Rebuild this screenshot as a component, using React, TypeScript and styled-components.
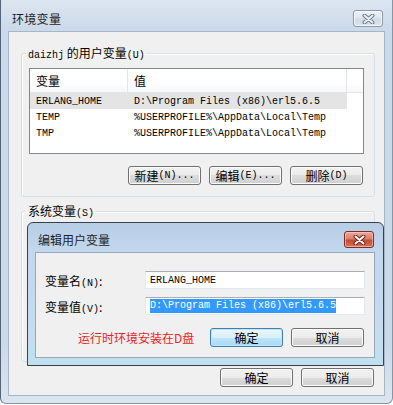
import styled, { createGlobalStyle } from "styled-components";

const GlobalStyle = createGlobalStyle`
  html, body {
    margin: 0;
    padding: 0;
    background: #ffffff;
  }
  body {
    font-family: "Noto Sans CJK SC", "Liberation Sans", sans-serif;
    font-size: 12px;
    color: #000;
  }
`;

const mono = `"Liberation Mono", "DejaVu Sans Mono", monospace`;

const Window = styled.div`
  position: relative;
  width: 393px;
  height: 404px;
  box-sizing: border-box;
  display: flex;
  flex-direction: column;
  background: linear-gradient(#dde6f0, #cbd9ea 30px, #ccd9e9 85%, #dbe5ef);
  border-left: 1px solid #56647a;
  border-right: 1px solid #8795a8;
  border-bottom: 1px solid #8795a8;
  border-radius: 0 0 6px 6px;
  overflow: hidden;
`;

const TitleBar = styled.div`
  flex: 0 0 31px;
  box-sizing: border-box;
  padding: 6px 9px 0 11px;
  display: flex;
  align-items: center;
  justify-content: space-between;
  color: #1e1e1e;
  letter-spacing: 0.3px;
`;

const CloseBox = styled.div<{ $danger?: boolean }>`
  width: 30px;
  height: 17px;
  box-sizing: border-box;
  border-radius: 3px;
  display: flex;
  align-items: center;
  justify-content: center;
  border: 1px solid ${(p) => (p.$danger ? "#7d2d22" : "#8b98a8")};
  background: ${(p) =>
    p.$danger
      ? "linear-gradient(#eaa99a, #d9806c 45%, #c24a33 55%, #d6735d)"
      : "linear-gradient(#eef2f6, #dfe6ee 45%, #d1dae5 55%, #dde4ec)"};
  box-shadow: inset 0 0 0 1px ${(p) => (p.$danger ? "rgba(255,210,200,0.6)" : "rgba(255,255,255,0.7)")};
`;

const Panel = styled.div`
  flex: 1 1 auto;
  min-height: 0;
  overflow: hidden;
  margin: 0 7px 7px 7px;
  box-sizing: border-box;
  background: #f0f0f0;
  border: 1px solid #a6b6c9;
  padding: 14px 9px 8px 12px;
  display: flex;
  flex-direction: column;
`;

const Group = styled.fieldset<{ $gap?: number }>`
  margin: ${(p) => p.$gap ?? 0}px 0 0 0;
  padding: 0 10px 11px 7px;
  border: 1px solid #d5dfe5;
  border-radius: 3px;
  box-shadow: inset 1px 1px 0 #ffffff;
  min-width: 0;
  flex-shrink: 0;
`;

const Legend = styled.legend`
  margin-left: -3px;
  padding: 0 2px;
  height: 14px;
  line-height: 14px;
  color: #000;
`;

const Key = styled.span`
  font-family: ${mono};
  font-size: 10px;
`;

const List = styled.div<{ $h: number }>`
  margin-top: 8px;
  height: ${(p) => p.$h}px;
  box-sizing: border-box;
  border: 1px solid #828790;
  background: #ffffff;
  overflow: hidden;
`;

const Header = styled.div`
  display: grid;
  grid-template-columns: 98px 219px 1fr;
  height: 23px;
  border-bottom: 1px solid #e5e5e5;
  background: linear-gradient(#ffffff, #ffffff 60%, #f6f7f9);
`;

const HeadCell = styled.div`
  display: flex;
  align-items: center;
  padding-left: 6px;
  border-right: 1px solid #e5e5e5;
  &:last-child {
    border-right: none;
  }
`;

const Row = styled.div<{ $selected?: boolean }>`
  display: grid;
  grid-template-columns: 98px 219px;
  height: 16px;
  align-items: center;
  font-family: ${mono};
  font-size: 10px;
  background: ${(p) => (p.$selected ? "#e4e4e4" : "transparent")};
  width: 317px;
`;

const Cell = styled.div`
  padding-left: 6px;
  white-space: nowrap;
`;

const ButtonRow = styled.div<{ $top: number }>`
  display: flex;
  justify-content: flex-end;
  gap: 8px;
  margin-top: ${(p) => p.$top}px;
  padding-right: 1px;
  flex-shrink: 0;
`;

const Button = styled.div<{ $focus?: boolean }>`
  width: 73px;
  height: 19px;
  box-sizing: border-box;
  border-radius: 3px;
  display: flex;
  align-items: center;
  justify-content: center;
  white-space: nowrap;
  line-height: 1;
  border: 1px solid ${(p) => (p.$focus ? "#3c7fb1" : "#707070")};
  background: ${(p) =>
    p.$focus
      ? "linear-gradient(#eaf6fd, #d9f0fc 50%, #bee6fd 50%, #a7d9f5)"
      : "linear-gradient(#f2f2f2, #ebebeb 50%, #dddddd 50%, #cfcfcf)"};
  box-shadow: inset 0 0 0 1px ${(p) => (p.$focus ? "#c4e5f6" : "#fcfcfc")};
`;

const Dialog = styled.div`
  position: absolute;
  left: 26px;
  top: 222px;
  width: 357px;
  height: 144px;
  box-sizing: border-box;
  border: 1px solid #37414e;
  border-radius: 6px 6px 0 0;
  background: linear-gradient(#b8cee6, #c3d7ed 28px, #c6dcef 80%, #bfe0ef);
  display: flex;
  flex-direction: column;
`;

const DialogTitle = styled.div`
  flex: 0 0 29px;
  box-sizing: border-box;
  padding: 4px 9px 0 10px;
  display: flex;
  align-items: center;
  justify-content: space-between;
  color: #1e1e1e;
`;

const DialogBody = styled.div`
  flex: 1;
  margin: 0 8px 7px 7px;
  background: #f0f0f0;
  border: 1px solid #97a8bb;
  padding: 18px 9px 10px 9px;
`;

const Form = styled.div`
  display: grid;
  grid-template-columns: 100px 1fr;
  grid-auto-rows: 18px;
  row-gap: 8px;
  align-items: center;
`;

const Input = styled.div`
  height: 18px;
  box-sizing: border-box;
  border: 1px solid #e3e9ef;
  border-top-color: #abadb3;
  background: #ffffff;
  padding-left: 4px;
  display: flex;
  align-items: center;
  font-family: ${mono};
  font-size: 10px;
  white-space: nowrap;
`;

const Selected = styled.span`
  background: #3399ff;
  color: #ffffff;
  line-height: 14px;
`;

const Footer = styled.div`
  display: flex;
  align-items: center;
  gap: 8px;
  margin-top: 13px;
  padding-right: 1px;
`;

const Hint = styled.div`
  flex: 1;
  padding-left: 33px;
  color: #ee1c25;
`;

const CloseIcon = ({ danger }: { danger?: boolean }) => (
  <svg width="13" height="10" viewBox="0 0 13 10">
    <path
      d="M2.5 1.5 L10.5 8.5 M10.5 1.5 L2.5 8.5"
      stroke={danger ? "#6e1f14" : "#6b7888"}
      strokeWidth="4"
      strokeLinecap="round"
    />
    <path
      d="M2.5 1.5 L10.5 8.5 M10.5 1.5 L2.5 8.5"
      stroke={danger ? "#ffffff" : "#eef2f6"}
      strokeWidth="2"
      strokeLinecap="round"
    />
  </svg>
);

const userVars = [
  ["ERLANG_HOME", "D:\\Program Files (x86)\\erl5.6.5"],
  ["TEMP", "%USERPROFILE%\\AppData\\Local\\Temp"],
  ["TMP", "%USERPROFILE%\\AppData\\Local\\Temp"],
];

export default function App() {
  return (
    <>
      <GlobalStyle />
      <Window>
        <TitleBar>
          <span>环境变量</span>
          <CloseBox>
            <CloseIcon />
          </CloseBox>
        </TitleBar>
        <Panel>
          <Group>
            <Legend>
              <Key>daizhj</Key> 的用户变量<Key>(U)</Key>
            </Legend>
            <List $h={86}>
              <Header>
                <HeadCell>变量</HeadCell>
                <HeadCell>值</HeadCell>
                <HeadCell />
              </Header>
              {userVars.map(([name, value], i) => (
                <Row key={name} $selected={i === 0}>
                  <Cell>{name}</Cell>
                  <Cell>{value}</Cell>
                </Row>
              ))}
            </List>
            <ButtonRow $top={12}>
              <Button>
                新建<Key>(N)...</Key>
              </Button>
              <Button>
                编辑<Key>(E)...</Key>
              </Button>
              <Button>
                删除<Key>(D)</Key>
              </Button>
            </ButtonRow>
          </Group>
          <Group $gap={7}>
            <Legend>
              系统变量<Key>(S)</Key>
            </Legend>
            {/* the system list sits under the edit dialog */}
            <List $h={124} />
          </Group>
          <ButtonRow $top={6}>
            <Button>确定</Button>
            <Button>取消</Button>
          </ButtonRow>
        </Panel>

        <Dialog>
          <DialogTitle>
            <span>编辑用户变量</span>
            <CloseBox $danger>
              <CloseIcon danger />
            </CloseBox>
          </DialogTitle>
          <DialogBody>
            <Form>
              <span>
                变量名<Key>(N)</Key>:
              </span>
              <Input>ERLANG_HOME</Input>
              <span>
                变量值<Key>(V)</Key>:
              </span>
              <Input>
                <Selected>D:\Program Files (x86)\erl5.6.5</Selected>
              </Input>
            </Form>
            <Footer>
              <Hint>运行时环境安装在D盘</Hint>
              <Button $focus>确定</Button>
              <Button>取消</Button>
            </Footer>
          </DialogBody>
        </Dialog>
      </Window>
    </>
  );
}
